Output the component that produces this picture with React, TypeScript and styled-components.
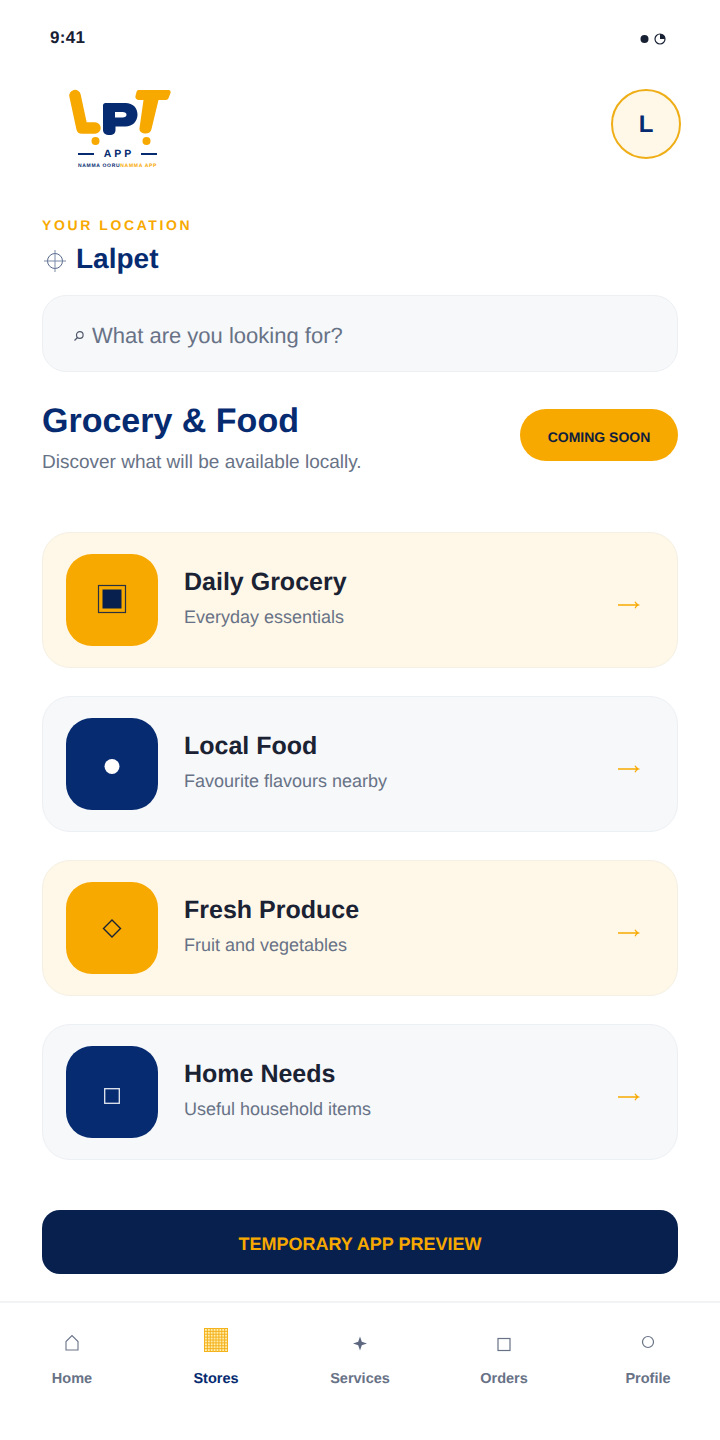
import React from "react";
import styled, { createGlobalStyle } from "styled-components";

const NAVY = "#062B70";
const GOLD = "#F7A900";

const Global = createGlobalStyle`
  html, body { margin: 0; padding: 0; background: #fff; }
  body { font-family: "Liberation Sans", Arial, sans-serif; text-rendering: geometricPrecision; }
  * { box-sizing: border-box; }
`;

const Page = styled.div`
  width: 720px; height: 1440px; display: flex; flex-direction: column; background: #fff; overflow: hidden;
`;
const StatusBar = styled.div`
  height: 76px; padding: 26px 54px 0 50px; display: flex; justify-content: space-between; align-items: flex-start;
`;
const Time = styled.span`
  font-size: 17px; line-height: 24px; font-weight: 700; letter-spacing: .3px; color: #182033;
`;
const StatusIcons = styled.svg`
  width: 26px; height: 12px; margin-top: 7px; display: block;
`;
const Header = styled.header`
  height: 124px; padding: 0 39px 0 42px; display: flex; justify-content: space-between; align-items: flex-start;
`;
const LogoBox = styled.div`
  width: 148px; height: 96px; display: flex; flex-direction: column; align-items: center; margin-top: 10px; padding-left: 3px;
`;
const LogoArt = styled.svg`
  width: 110px; height: 58px; display: block; flex: none; overflow: visible;
`;
const AppRow = styled.div`
  display: flex; align-items: center; gap: 10px; height: 12px; margin-top: 4px;
`;
const AppDash = styled.span`
  width: 16px; height: 1.5px; background: ${NAVY};
`;
const AppWord = styled.span`
  font-size: 10.5px; font-weight: 700; letter-spacing: 3px; color: ${NAVY}; margin-right: -3px;
`;
const Tagline = styled.div`
  font-size: 5px; font-weight: 700; letter-spacing: .7px; margin-top: 3px; white-space: nowrap; color: ${NAVY};
`;
const TaglineGold = styled.span`
  color: ${GOLD};
`;
const Avatar = styled.div`
  width: 70px; height: 70px; border-radius: 50%; border: 2.5px solid #EFAE16; background: #FFF8E8; color: ${NAVY};
  margin-top: 13px; padding-top: 2px; display: flex; align-items: center; justify-content: center; font-size: 24px; font-weight: 700;
`;
const Main = styled.main`
  padding: 16px 42px 0; flex: 1; display: flex; flex-direction: column;
`;
const Eyebrow = styled.div`
  font-size: 14px; line-height: 18px; font-weight: 700; letter-spacing: 2.6px; color: ${GOLD};
`;
const LocationRow = styled.div`
  display: flex; align-items: center; gap: 8px; height: 36px; margin-top: 7px;
`;
const LocationIcon = styled.svg`
  width: 26px; height: 26px; flex: none; margin-top: 4px;
`;
const LocationName = styled.span`
  font-size: 28px; font-weight: 700; color: ${NAVY};
`;
const Search = styled.div`
  height: 77px; margin-top: 18px; background: #F6F8FA; border: 1px solid #EDF0F3; border-radius: 24px;
  display: flex; align-items: center; padding: 4px 0 0 30px; gap: 7px;
`;
const SearchIcon = styled.svg`
  width: 12px; height: 12px; flex: none;
`;
const SearchText = styled.span`
  font-size: 22px; color: #687286;
`;
const SectionHead = styled.section`
  margin-top: 29px; height: 71px; display: flex; justify-content: space-between; align-items: flex-start;
`;
const SectionTitle = styled.h1`
  margin: 0; font-size: 34px; line-height: 40px; font-weight: 700; color: ${NAVY};
`;
const SectionSub = styled.p`
  margin: 10px 0 0; font-size: 19px; line-height: 24px; color: #687286;
`;
const SoonBadge = styled.div`
  width: 158px; height: 52px; border-radius: 26px; background: ${GOLD}; color: #0F1E3D; margin-top: 8px; padding-top: 3px;
  display: flex; align-items: center; justify-content: center; font-size: 14px; font-weight: 700;
`;
const CardList = styled.div`
  margin-top: 60px; display: flex; flex-direction: column; gap: 28px;
`;
const Card = styled.div<{ $warm: boolean }>`
  height: 136px; border-radius: 28px; padding: 0 35px 0 23px; display: flex; align-items: center;
  background: ${p => (p.$warm ? "#FFF8E8" : "#F6F8FA")}; border: 1px solid ${p => (p.$warm ? "#F4F0E4" : "#EDF0F3")};
`;
const IconTile = styled.div<{ $warm: boolean }>`
  width: 92px; height: 92px; border-radius: 26px; flex: none; display: flex; align-items: center; justify-content: center;
  background: ${p => (p.$warm ? GOLD : NAVY)};
`;
const TileGlyph = styled.svg`
  width: 32px; height: 32px; overflow: visible;
`;
const CardText = styled.div`
  margin: -4px 0 0 26px; flex: 1; display: flex; flex-direction: column;
`;
const CardTitle = styled.div`
  font-size: 25px; line-height: 30px; font-weight: 700; color: #1A2233;
`;
const CardSub = styled.div`
  font-size: 18px; line-height: 24px; margin-top: 8px; color: #687286;
`;
const Arrow = styled.svg`
  width: 28px; height: 12px; margin-top: 10px; flex: none;
`;
const Cta = styled.div`
  height: 64px; margin-top: 50px; border-radius: 18px; background: #07204D; color: ${GOLD}; padding-top: 4px;
  display: flex; align-items: center; justify-content: center; font-size: 18px; font-weight: 700;
`;
const Nav = styled.nav`
  height: 139px; border-top: 2px solid #F1F3F5; display: grid; grid-template-columns: repeat(5, 144px); padding-top: 21px;
`;
const NavItem = styled.div`
  display: flex; flex-direction: column; align-items: center;
`;
const NavIconBox = styled.div`
  height: 40px; width: 40px; display: flex; align-items: center; justify-content: center;
`;
const NavSvg = styled.svg`
  width: 28px; height: 28px;
`;
const GridSvg = styled.svg`
  width: 24px; height: 24px; margin-top: -8px;
`;
const NavLabel = styled.span<{ $active?: boolean }>`
  margin-top: 6px; font-size: 14.5px; line-height: 18px; font-weight: 700; color: ${p => (p.$active ? NAVY : "#687286")};
`;

const cards = [
  { title: "Daily Grocery", sub: "Everyday essentials", warm: true, icon: "grocery" },
  { title: "Local Food", sub: "Favourite flavours nearby", warm: false, icon: "food" },
  { title: "Fresh Produce", sub: "Fruit and vegetables", warm: true, icon: "produce" },
  { title: "Home Needs", sub: "Useful household items", warm: false, icon: "home" },
];

function CardIcon({ kind }: { kind: string }) {
  return (
    <TileGlyph viewBox="0 0 32 32">
      {kind === "grocery" && (
        <>
          <rect x="2.5" y="1.5" width="27" height="27" fill="none" stroke="#2A3140" strokeWidth="1.2" />
          <rect x="6.5" y="5.5" width="19" height="19" fill="#07204D" />
        </>
      )}
      {kind === "food" && <circle cx="16" cy="18.5" r="7.5" fill="#fff" />}
      {kind === "produce" && <path d="M16 8 24.5 16.5 16 25 7.5 16.5Z" fill="none" stroke="#1A2233" strokeWidth="1.4" />}
      {kind === "home" && <rect x="8.7" y="12.7" width="14.6" height="14.6" fill="none" stroke="#E4E8F0" strokeWidth="1.3" />}
    </TileGlyph>
  );
}

function StoresGrid() {
  const lines = [];
  for (let i = 0; i <= 8; i++) {
    const p = 0.5 + i * 2.875;
    lines.push(<path key={"v" + i} d={`M${p} 0V24`} />);
    lines.push(<path key={"h" + i} d={`M0 ${p}H24`} />);
  }
  return (
    <GridSvg viewBox="0 0 24 24">
      <rect width="24" height="24" fill="#FFEDB0" />
      <g stroke="#F4B21C" strokeWidth="1" fill="none">{lines}</g>
    </GridSvg>
  );
}

const navItems = [
  { label: "Home", icon: <NavSvg viewBox="0 0 28 28"><path d="M8 20V11.5L14 5.5 20 11.5V20Z" fill="none" stroke="#687286" strokeWidth="1.1" /></NavSvg> },
  { label: "Stores", active: true, icon: <StoresGrid /> },
  { label: "Services", icon: <NavSvg viewBox="0 0 28 28"><path d="M14 6.5 15.8 11.7 21 13.5 15.8 15.3 14 20.5 12.2 15.3 7 13.5 12.2 11.7Z" fill="#5D6880" /></NavSvg> },
  { label: "Orders", icon: <NavSvg viewBox="0 0 28 28"><rect x="8" y="8.5" width="12" height="12" fill="none" stroke="#687286" strokeWidth="1.2" /></NavSvg> },
  { label: "Profile", icon: <NavSvg viewBox="0 0 28 28"><circle cx="14" cy="12" r="5.5" fill="none" stroke="#687286" strokeWidth="1.2" /></NavSvg> },
];

export default function App() {
  return (
    <Page>
      <Global />
      <StatusBar>
        <Time>9:41</Time>
        <StatusIcons viewBox="0 0 26 12">
          <circle cx="4.5" cy="6" r="4" fill="#182033" />
          <circle cx="20" cy="6" r="5" fill="none" stroke="#182033" strokeWidth="1.2" />
          <path d="M20 6V1A5 5 0 0 1 25 6Z" fill="#182033" />
        </StatusIcons>
      </StatusBar>
      <Header>
        <LogoBox>
          <LogoArt viewBox="-2.5 -2 110 58">
            <path d="M9.5 7.5 16.5 40H29.5" fill="none" stroke={GOLD} strokeWidth="11.5" strokeLinecap="round" strokeLinejoin="round" />
            <circle cx="30" cy="53" r="4" fill={GOLD} />
            <path fillRule="evenodd" fill={NAVY} d="M40 15H60C67.5 15 72 20 72 26.5C72 33.5 67 38.5 60 38.5H50V42C50 45 48 47 44 47C40 47 37.5 45 37.5 42V17.5C37.5 16 38.5 15 40 15ZM49.5 24V29.5H57C59.5 29.5 61 28.5 61 26.75C61 25 59.5 24 57 24Z" />
            <path d="M73 2H103C105 2 105.5 3.5 105 5L103.500 9C103 11 102 12 100 12H93L86 41C85.500 44 83 45.500 80 45.500C76 45.500 73.500 43 74 40L78 12H74C71 12 69.500 10 70 8L71 4C71.300 2.700 72 2 73 2Z" fill={GOLD} />
            <circle cx="81" cy="53" r="4" fill={GOLD} />
          </LogoArt>
          <AppRow>
            <AppDash />
            <AppWord>APP</AppWord>
            <AppDash />
          </AppRow>
          <Tagline>NAMMA OORU<TaglineGold>NAMMA APP</TaglineGold></Tagline>
        </LogoBox>
        <Avatar>L</Avatar>
      </Header>
      <Main>
        <Eyebrow>YOUR LOCATION</Eyebrow>
        <LocationRow>
          <LocationIcon viewBox="0 0 26 26">
            <circle cx="13" cy="13" r="7.5" fill="none" stroke="#56688C" strokeWidth="1" />
            <path d="M2 13H24M13 2V24" stroke="#7B8AA8" strokeWidth="1" />
          </LocationIcon>
          <LocationName>Lalpet</LocationName>
        </LocationRow>
        <Search>
          <SearchIcon viewBox="0 0 12 12">
            <circle cx="6.8" cy="5" r="3.3" fill="none" stroke="#50596C" strokeWidth="1.2" />
            <path d="M4.5 7.5 1.5 10.5" stroke="#50596C" strokeWidth="1.3" />
          </SearchIcon>
          <SearchText>What are you looking for?</SearchText>
        </Search>
        <SectionHead>
          <div>
            <SectionTitle>Grocery &amp; Food</SectionTitle>
            <SectionSub>Discover what will be available locally.</SectionSub>
          </div>
          <SoonBadge>COMING SOON</SoonBadge>
        </SectionHead>
        <CardList>
          {cards.map(c => (
            <Card key={c.title} $warm={c.warm}>
              <IconTile $warm={c.warm}><CardIcon kind={c.icon} /></IconTile>
              <CardText>
                <CardTitle>{c.title}</CardTitle>
                <CardSub>{c.sub}</CardSub>
              </CardText>
              <Arrow viewBox="0 0 28 12">
                <path d="M4 6H24.5M21 2.800C21.700 4.200 22.900 5.400 24.500 6C22.900 6.600 21.700 7.800 21 9.200" fill="none" stroke={GOLD} strokeWidth="1.300" />
              </Arrow>
            </Card>
          ))}
        </CardList>
        <Cta>TEMPORARY APP PREVIEW</Cta>
      </Main>
      <Nav>
        {navItems.map(n => (
          <NavItem key={n.label}>
            <NavIconBox>{n.icon}</NavIconBox>
            <NavLabel $active={n.active}>{n.label}</NavLabel>
          </NavItem>
        ))}
      </Nav>
    </Page>
  );
}
